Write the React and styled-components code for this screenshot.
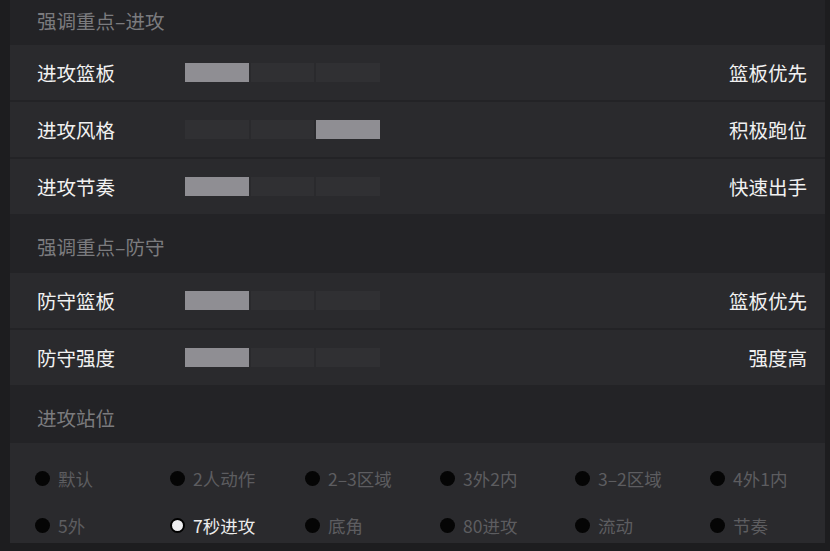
import React from 'react';
import styled, { createGlobalStyle } from 'styled-components';

const GlobalStyle = createGlobalStyle`
  html, body {
    margin: 0;
    padding: 0;
    background: #1d1d1f;
  }
  body {
    font-family: 'Noto Sans CJK SC', 'Noto Sans', sans-serif;
    overflow: hidden;
  }
`;

const Page = styled.div`
  display: flex;
  width: 830px;
  height: 551px;
  background: #1d1d1f;
  padding-left: 10px;
  padding-right: 5px;
  box-sizing: border-box;
`;

const Panel = styled.div`
  flex: 1;
  min-width: 0;
  overflow: hidden;
  display: flex;
  flex-direction: column;
  background: #232326;
  height: 543px;
`;

const Header = styled.div`
  display: flex;
  align-items: center;
  box-sizing: border-box;
  height: ${(p) => (p.$compact ? '44px' : '58px')};
  padding: ${(p) => (p.$compact ? '0 0 4px 27px' : '7px 0 0 27px')};
  font-size: 19.5px;
  color: #7b7b7e;
`;

const RowList = styled.div`
  display: flex;
  flex-direction: column;
  gap: 2px;
  padding-top: 1px;
`;

const Row = styled.div`
  display: flex;
  align-items: center;
  height: 55px;
  padding: 0 18px 0 27px;
  background: #2a2a2d;
`;

const Label = styled.div`
  width: 148px;
  font-size: 19.5px;
  color: #f1f1f1;
`;

const Bar = styled.div`
  display: flex;
  gap: 2px;
`;

const Segment = styled.div`
  width: 63.5px;
  height: 19px;
  background: ${(p) => (p.$on ? '#8f8e93' : '#303033')};
`;

const Value = styled.div`
  margin-left: auto;
  font-size: 19.5px;
  color: #f1f1f1;
`;

const Options = styled.div`
  display: grid;
  grid-template-columns: repeat(6, 135px);
  grid-auto-rows: 24px;
  row-gap: 23px;
  padding: 23px 0 6px 25px;
  background: #2a2a2d;
  flex: 1;
`;

const Option = styled.div`
  display: flex;
  align-items: center;
  gap: 8px;
  font-size: 17.5px;
  white-space: nowrap;
  color: ${(p) => (p.$checked ? '#ececec' : '#5d5d60')};
`;

const Dot = styled.span`
  width: 15px;
  height: 15px;
  border-radius: 50%;
  box-sizing: border-box;
  flex-shrink: 0;
  background: ${(p) => (p.$checked ? '#ececee' : '#050505')};
  border: ${(p) => (p.$checked ? '2px solid #000' : 'none')};
`;

const attack = [
  { label: '进攻篮板', level: 0, value: '篮板优先' },
  { label: '进攻风格', level: 2, value: '积极跑位' },
  { label: '进攻节奏', level: 0, value: '快速出手' },
];

const defense = [
  { label: '防守篮板', level: 0, value: '篮板优先' },
  { label: '防守强度', level: 0, value: '强度高' },
];

const formations = [
  '默认', '2人动作', '2–3区域', '3外2内', '3–2区域', '4外1内',
  '5外', '7秒进攻', '底角', '80进攻', '流动', '节奏',
];

const SettingRow = ({ label, level, value }) => (
  <Row>
    <Label>{label}</Label>
    <Bar>
      {[0, 1, 2].map((i) => (
        <Segment key={i} $on={i === level} />
      ))}
    </Bar>
    <Value>{value}</Value>
  </Row>
);

const App = () => (
  <>
    <GlobalStyle />
    <Page>
      <Panel>
        <Header $compact>强调重点–进攻</Header>
        <RowList>
          {attack.map((r) => (
            <SettingRow key={r.label} {...r} />
          ))}
        </RowList>
        <Header>强调重点–防守</Header>
        <RowList>
          {defense.map((r) => (
            <SettingRow key={r.label} {...r} />
          ))}
        </RowList>
        <Header>进攻站位</Header>
        <Options>
          {formations.map((name) => (
            <Option key={name} $checked={name === '7秒进攻'}>
              <Dot $checked={name === '7秒进攻'} />
              {name}
            </Option>
          ))}
        </Options>
      </Panel>
    </Page>
  </>
);

export default App;
